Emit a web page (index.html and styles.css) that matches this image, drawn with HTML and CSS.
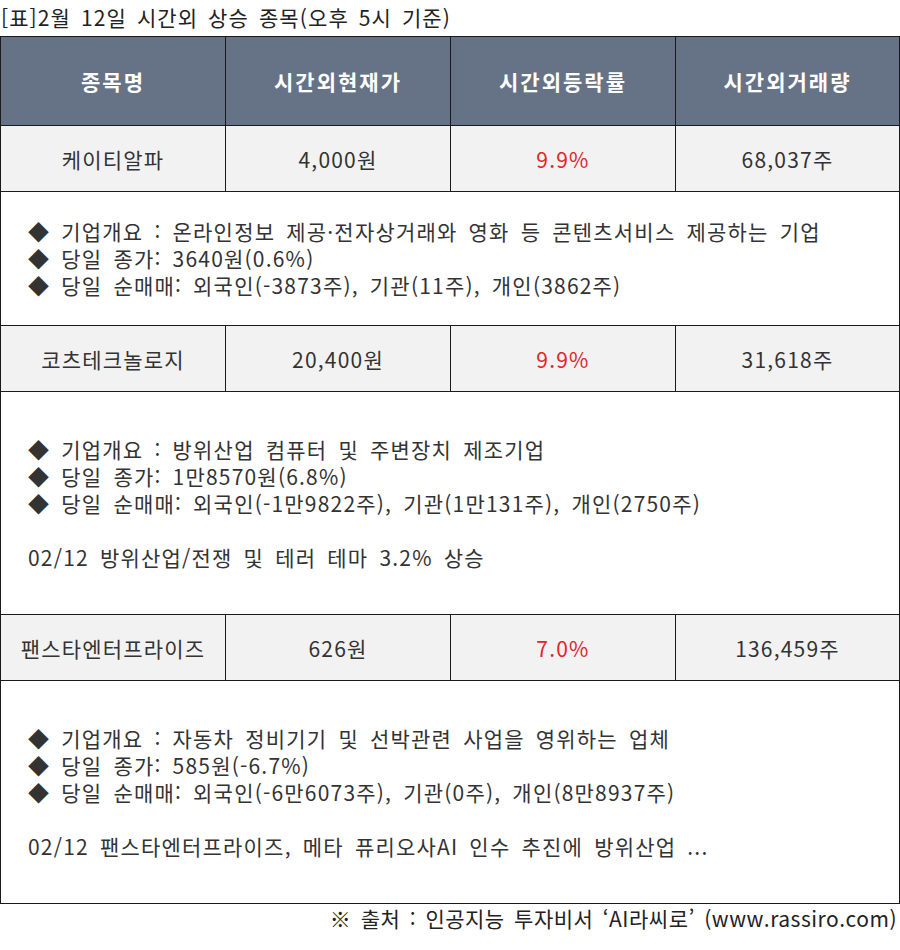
FILE: index.html
```html
<!DOCTYPE html>
<html lang="ko">
<head>
<meta charset="utf-8">
<link rel="stylesheet" href="styles.css">
</head>
<body>
<div class="page">
  <div class="title">[표]2월 12일 시간외 상승 종목(오후 5시 기준)</div>
  <table class="stock-table">
    <colgroup>
      <col class="c1"><col class="c2"><col class="c3"><col class="c4">
    </colgroup>
    <thead>
      <tr class="head-row">
        <th>종목명</th>
        <th>시간외현재가</th>
        <th>시간외등락률</th>
        <th>시간외거래량</th>
      </tr>
    </thead>
    <tbody>
      <tr class="data-row">
        <td>케이티알파</td>
        <td>4,000원</td>
        <td class="up">9.9%</td>
        <td>68,037주</td>
      </tr>
      <tr class="detail-row detail-short">
        <td colspan="4">
          <div class="line">◆ 기업개요 : 온라인정보 제공·전자상거래와 영화 등 콘텐츠서비스 제공하는 기업</div>
          <div class="line">◆ 당일 종가: 3640원(0.6%)</div>
          <div class="line">◆ 당일 순매매: 외국인(-3873주), 기관(11주), 개인(3862주)</div>
        </td>
      </tr>
      <tr class="data-row">
        <td>코츠테크놀로지</td>
        <td>20,400원</td>
        <td class="up">9.9%</td>
        <td>31,618주</td>
      </tr>
      <tr class="detail-row detail-long">
        <td colspan="4">
          <div class="line">◆ 기업개요 : 방위산업 컴퓨터 및 주변장치 제조기업</div>
          <div class="line">◆ 당일 종가: 1만8570원(6.8%)</div>
          <div class="line">◆ 당일 순매매: 외국인(-1만9822주), 기관(1만131주), 개인(2750주)</div>
          <div class="line blank">&nbsp;</div>
          <div class="line">02/12 방위산업/전쟁 및 테러 테마 3.2% 상승</div>
        </td>
      </tr>
      <tr class="data-row">
        <td>팬스타엔터프라이즈</td>
        <td>626원</td>
        <td class="up">7.0%</td>
        <td>136,459주</td>
      </tr>
      <tr class="detail-row detail-long">
        <td colspan="4">
          <div class="line">◆ 기업개요 : 자동차 정비기기 및 선박관련 사업을 영위하는 업체</div>
          <div class="line">◆ 당일 종가: 585원(-6.7%)</div>
          <div class="line">◆ 당일 순매매: 외국인(-6만6073주), 기관(0주), 개인(8만8937주)</div>
          <div class="line blank">&nbsp;</div>
          <div class="line">02/12 팬스타엔터프라이즈, 메타 퓨리오사AI 인수 추진에 방위산업 ...</div>
        </td>
      </tr>
    </tbody>
  </table>
  <div class="source">※ 출처 : 인공지능 투자비서 ‘AI라씨로’ (www.rassiro.com)</div>
</div>
</body>
</html>
```

FILE: styles.css
```css
* { box-sizing: border-box; }
html, body { margin: 0; padding: 0; background: #ffffff; }
body {
  font-family: "Noto Sans CJK KR", "Noto Sans", sans-serif;
  color: #333333;
  font-size: 21px;
  letter-spacing: 1.2px;
  word-spacing: 4px;
}
.page { width: 900px; }
.title {
  height: 36px;
  line-height: 34px;
  padding-left: 1px;
  color: #222222;
  letter-spacing: 1.1px;
  word-spacing: 3px;
  white-space: nowrap;
}
.stock-table {
  width: 899px;
  border-collapse: collapse;
  table-layout: fixed;
}
.stock-table col { width: 225px; }
.stock-table col.c4 { width: 224px; }
.stock-table th,
.stock-table td {
  border: 1px solid #1a1a1a;
  padding: 0;
}
.head-row th {
  height: 89px;
  background: #667285;
  color: #ffffff;
  font-weight: 700;
  letter-spacing: 2px;
  text-align: center;
  vertical-align: middle;
}
.data-row td {
  height: 66px;
  background: #f2f2f2;
  text-align: center;
  vertical-align: middle;
  color: #333333;
}
.data-row td.up { color: #e0262b; }
.detail-row td {
  background: #ffffff;
  padding-left: 27px;
  vertical-align: middle;
  text-align: left;
}
.detail-short td { height: 134px; }
.detail-long td { height: 223px; }
.line {
  line-height: 27px;
  white-space: nowrap;
}
.source {
  text-align: right;
  padding-right: 3px;
  line-height: 28px;
  color: #222222;
  letter-spacing: 0.5px;
  word-spacing: 3px;
}
```
